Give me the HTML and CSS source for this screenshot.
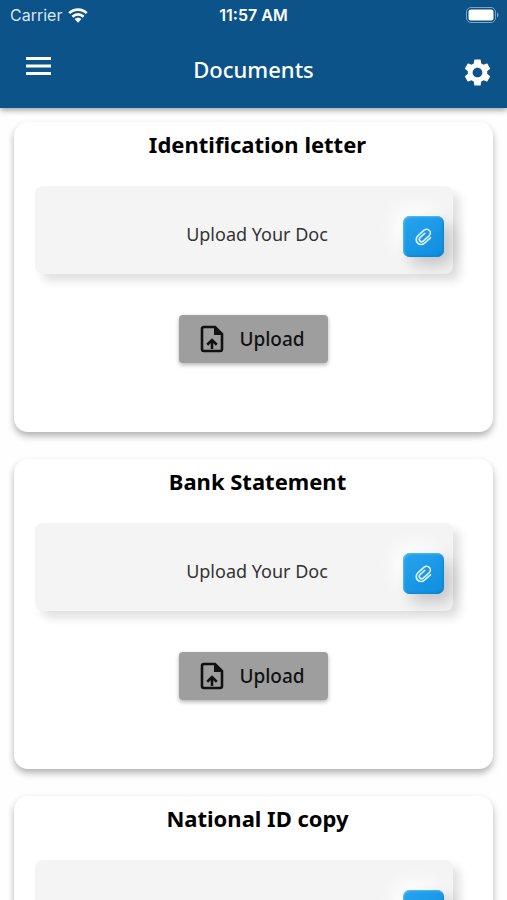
FILE: index.html
```
<!DOCTYPE html>
<html lang="en">
<head>
  <meta charset="UTF-8">
  <meta name="viewport" content="width=device-width, initial-scale=1">
  <title>Documents</title>
  <link rel="stylesheet" href="styles.css">
</head>
<body>
  <svg class="sprite" aria-hidden="true">
    <symbol id="icon-clip" viewBox="0 0 24 24">
      <g transform="rotate(48 12 12)" fill="none" stroke="currentColor" stroke-width="2" stroke-linecap="round">
        <path d="M18 7v9.500a6 6 0 0 1-12 0V6.500a4.500 4.500 0 0 1 9 0v9.500a2.800 2.800 0 0 1-5.600 0V8.500"/>
      </g>
    </symbol>
    <symbol id="icon-file" viewBox="0 0 24 28">
      <path d="M4 2h11l7 7v15a2 2 0 0 1-2 2H4a2 2 0 0 1-2-2V4a2 2 0 0 1 2-2z" fill="none" stroke="currentColor" stroke-width="2.600"/>
      <path d="M14 1.500V10h8.500z" fill="currentColor"/>
      <path d="M12 24v-8M7.200 19.700L12 15l4.800 4.700" fill="none" stroke="currentColor" stroke-width="2.600"/>
    </symbol>
  </svg>

  <header class="header">
    <div class="status">
      <span class="carrier">Carrier
        <svg class="wifi" viewBox="0 0 20 15">
          <path d="M1.200 5.200a12.500 12.500 0 0 1 17.600 0M4.400 8.700a8 8 0 0 1 11.200 0" fill="none" stroke="#fff" stroke-width="2.600"/>
          <path d="M6.600 11.100a5 5 0 0 1 6.800 0L10 14.700z" fill="#fff"/>
        </svg>
      </span>
      <span class="time">11:57 AM</span>
      <svg class="battery" viewBox="0 0 33 16">
        <rect x="0.500" y="0.500" width="29" height="15" rx="4.500" fill="none" stroke="#7fa2bf"/>
        <rect x="2.500" y="2.500" width="25" height="11" rx="2.500" fill="#fff"/>
        <path d="M31 5.500c2 .8 2 4.200 0 5z" fill="#7fa2bf"/>
      </svg>
    </div>
    <div class="toolbar">
      <button class="icon-button menu" type="button" aria-label="Menu">
        <svg class="menu-icon" viewBox="0 0 25 18">
          <path d="M0 1.500h25M0 9h25M0 16.500h25" stroke="#fff" stroke-width="2.800"/>
        </svg>
      </button>
      <h1>Documents</h1>
      <button class="icon-button settings" type="button" aria-label="Settings">
        <svg class="gear-icon" viewBox="2 2 20 20">
          <path fill="#fff" d="M19.140 12.940c.04-.3.060-.61.060-.94 0-.32-.02-.64-.07-.94l2.030-1.580c.18-.14.23-.41.120-.61l-1.920-3.320c-.12-.22-.37-.29-.59-.22l-2.390.96c-.5-.38-1.030-.7-1.620-.94l-.36-2.540c-.04-.24-.24-.41-.48-.41h-3.840c-.24 0-.43.17-.47.41l-.36 2.540c-.59.24-1.130.57-1.620.94l-2.390-.96c-.22-.08-.47 0-.59.22L2.740 8.870c-.12.21-.08.47.12.61l2.030 1.580c-.05.3-.09.63-.09.94s.02.64.07.94l-2.030 1.580c-.18.14-.23.41-.12.61l1.920 3.320c.12.22.37.29.59.22l2.390-.96c.5.38 1.030.7 1.620.94l.36 2.540c.05.24.24.41.48.41h3.840c.24 0 .44-.17.47-.41l.36-2.540c.59-.24 1.130-.56 1.620-.94l2.390.96c.22.08.47 0 .59-.22l1.920-3.320c.12-.22.070-.47-.12-.61l-2.010-1.580zM12 15.600c-1.980 0-3.600-1.620-3.600-3.600s1.620-3.600 3.600-3.600 3.600 1.620 3.600 3.600-1.620 3.600-3.600 3.600z"/>
        </svg>
      </button>
    </div>
  </header>

  <main class="documents">
    <section class="card">
      <h2>Identification letter</h2>
      <div class="picker">
        <span class="picker-text">Upload Your Doc</span>
        <button class="attach" type="button" aria-label="Attach identification letter"><svg><use href="#icon-clip"/></svg></button>
      </div>
      <button class="upload" type="button"><svg><use href="#icon-file"/></svg>Upload</button>
    </section>

    <section class="card">
      <h2>Bank Statement</h2>
      <div class="picker">
        <span class="picker-text">Upload Your Doc</span>
        <button class="attach" type="button" aria-label="Attach bank statement"><svg><use href="#icon-clip"/></svg></button>
      </div>
      <button class="upload" type="button"><svg><use href="#icon-file"/></svg>Upload</button>
    </section>

    <section class="card">
      <h2>National ID copy</h2>
      <div class="picker">
        <span class="picker-text">Upload Your Doc</span>
        <button class="attach" type="button" aria-label="Attach national ID copy"><svg><use href="#icon-clip"/></svg></button>
      </div>
      <button class="upload" type="button"><svg><use href="#icon-file"/></svg>Upload</button>
    </section>
  </main>
</body>
</html>
```

FILE: styles.css
```
* {
  box-sizing: border-box;
}
body {
  margin: 0;
  height: 100vh;
  display: flex;
  flex-direction: column;
  background: #fefefe;
  color: #000;
  font-family: "Noto Sans", sans-serif;
}
h1, h2 {
  margin: 0;
}
button {
  border: none;
  padding: 0;
  font-family: inherit;
  cursor: pointer;
}
svg {
  display: block;
}
.sprite {
  position: absolute;
  width: 0;
  height: 0;
}

/* header */
.header {
  flex: none;
  z-index: 1;
  background: #0b5388;
  color: #fff;
  box-shadow: 0 2px 6px rgba(0, 0, 0, 0.4);
}
.status {
  display: grid;
  grid-template-columns: 1fr auto 1fr;
  align-items: center;
  height: 30px;
  padding: 0 8px;
  font-family: Inter, sans-serif;
  font-size: 16px;
}
.carrier {
  display: flex;
  align-items: center;
  gap: 6px;
  padding-left: 2px;
  color: #dbe6ef;
}
.wifi {
  width: 20px;
  height: 15px;
}
.time {
  font-weight: 600;
}
.battery {
  justify-self: end;
  width: 33px;
  height: 16px;
}
.toolbar {
  display: grid;
  grid-template-columns: 1fr auto 1fr;
  align-items: center;
  height: 78px;
  padding: 0 16px;
}
.toolbar h1 {
  font-size: 22px;
  font-weight: 500;
}
.icon-button {
  background: none;
}
.menu {
  justify-self: start;
  padding: 0 10px 6px;
}
.settings {
  justify-self: end;
  padding-top: 6px;
}
.menu-icon {
  width: 25px;
  height: 18px;
}
.gear-icon {
  width: 27px;
  height: 27px;
}

/* document cards */
.documents {
  flex: 1;
  overflow-y: auto;
  scrollbar-width: none;
  padding: 14px;
}
.card {
  display: flex;
  flex-direction: column;
  align-items: center;
  height: 310px;
  margin-bottom: 27px;
  padding: 6px 21px;
  border-radius: 14px;
  background: #fff;
  box-shadow: 0 4px 7px rgba(0, 0, 0, 0.3);
}
.card h2 {
  padding-left: 8px;
  font-size: 22px;
  font-weight: 700;
  line-height: 32px;
}
.picker {
  align-self: stretch;
  display: flex;
  align-items: center;
  height: 88px;
  margin: 26px 19px 41px 0;
  padding: 0 9px 0 76px;
  border-radius: 8px;
  background: #f4f4f4;
  box-shadow: 7px 7px 10px rgba(0, 0, 0, 0.12);
}
.picker-text {
  flex: 1;
  padding-top: 7px;
  text-align: center;
  font-size: 18px;
  color: #333;
}
.attach {
  display: grid;
  place-items: center;
  width: 41px;
  height: 41px;
  margin-top: 13px;
  border-radius: 7px;
  background: linear-gradient(145deg, #28a4f0, #0d8ddd);
  color: #d8f0ff;
  box-shadow: 8px 8px 16px rgba(0, 0, 0, 0.2), -8px -8px 18px #fff,
    inset 1px 1px 2px #5abcf5, inset -1px -1px 2px #0b7fca;
}
.attach svg {
  width: 20px;
  height: 20px;
}
.upload {
  display: flex;
  align-items: center;
  gap: 15px;
  height: 48px;
  padding: 0 23px 0 21px;
  border-radius: 4px;
  background: #9e9e9e;
  color: #111;
  font-size: 19px;
  font-weight: 500;
  box-shadow: 0 2px 4px rgba(0, 0, 0, 0.3);
}
.upload svg {
  width: 24px;
  height: 28px;
}
```
